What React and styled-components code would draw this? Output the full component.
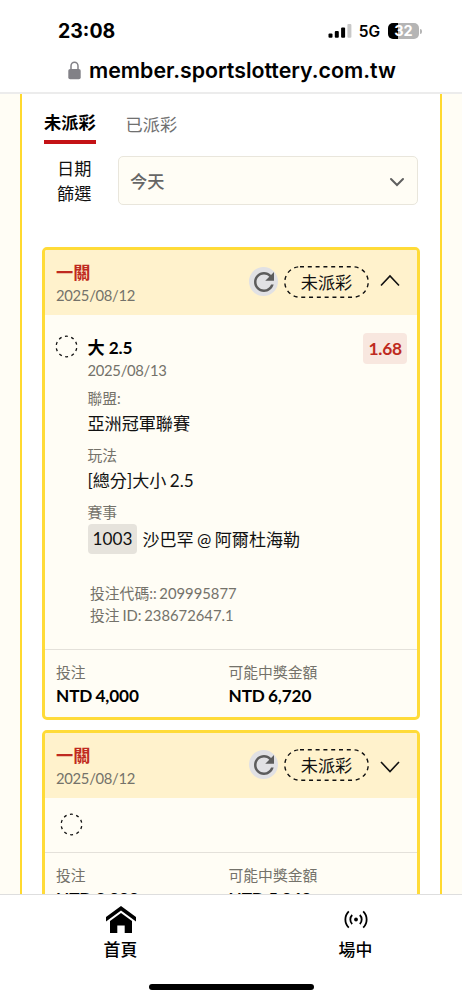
import React from 'react';
import styled, { createGlobalStyle, css } from 'styled-components';

const GlobalStyle = createGlobalStyle`
  *, *::before, *::after {
    box-sizing: border-box;
  }

  body {
    margin: 0;
    background-color: #fff;
    font-family: Lato, 'Noto Sans CJK TC', sans-serif;
    font-size: 17.2px;
    color: #111;
  }
`;

const StyledScreen = styled.div`
  height: 1000px;
  display: flex;
  flex-direction: column;
  overflow: hidden;
`;

const StyledBrowserBar = styled.header`
  flex: none;
  height: 94px;
  border-bottom: 2px solid #ececec;
  font-family: Inter, sans-serif;
  color: #000;
`;

const StyledStatus = styled.div`
  display: flex;
  align-items: center;
  justify-content: space-between;
  height: 32px;
  margin-top: 15px;
  padding: 0 40px 0 58px;
`;

const StyledTime = styled.span`
  font-size: 19.5px;
  font-weight: 700;
`;

const StyledSignals = styled.div`
  display: flex;
  align-items: center;
`;

const StyledNetwork = styled.span`
  margin: 0 8px 0 7px;
  font-size: 15.5px;
  font-weight: 600;
`;

const StyledBattery = styled.div`
  width: 31px;
  height: 16px;
  border-radius: 5px;
  background: linear-gradient(to right, #000 32%, #b5b5b5 32%);
  color: #fff;
  font-size: 14.5px;
  font-weight: 700;
  line-height: 16px;
  text-align: center;
`;

const StyledBatteryTip = styled.div`
  width: 2px;
  height: 5px;
  margin-left: 1px;
  border-radius: 0 2px 2px 0;
  background-color: #b5b5b5;
`;

const StyledAddress = styled.div`
  display: flex;
  align-items: center;
  height: 28px;
  margin-top: 9px;
  padding-left: 68px;
  font-size: 21.35px;
  font-weight: 600;

  svg {
    margin-right: 8px;
  }
`;

const StyledPage = styled.main`
  flex: 1;
  min-height: 0;
  overflow: hidden;
  padding: 0 20px;
  background-color: #fffdf5;
`;

const StyledPanel = styled.div`
  min-height: 100%;
  padding: 0 20px;
  border: solid #ffd92f;
  border-width: 0 2px;
  background-color: #fff;
`;

const StyledTabs = styled.nav`
  display: flex;
  gap: 30px;
  padding: 14px 0 0 2px;
`;

const StyledTab = styled.a`
  height: 36px;
  padding-top: 2px;
  line-height: 30px;
  color: #707070;

  ${({ $active }) =>
    $active &&
    css`
      padding-top: 0;
      border-bottom: 4px solid #c41216;
      color: #000;
      font-weight: 700;
    `}
`;

const StyledFilter = styled.div`
  display: flex;
  align-items: flex-end;
  margin-top: 11px;
`;

const StyledFilterLabel = styled.label`
  width: 62px;
  margin: 0 14px -1px 0;
  padding: 1px 12px 0 15px;
  line-height: 25px;
`;

const StyledSelect = styled.div`
  display: flex;
  flex: 1;
  align-items: center;
  justify-content: space-between;
  height: 49px;
  margin-right: 2px;
  padding: 0 12px 0 11px;
  border: 1px solid #e9e6dc;
  border-radius: 5px;
  background-color: #fffdf5;
  color: #666;
  font-weight: 500;

  svg {
    margin-top: 2px;
  }
`;

const StyledCard = styled.section`
  margin-bottom: 10px;
  overflow: hidden;
  border: 3px solid #ffdb38;
  border-radius: 5px;
  background-color: #fffdf5;

  &:first-of-type {
    margin-top: 42px;
  }
`;

const StyledCardHeader = styled.div`
  display: flex;
  align-items: center;
  height: 65px;
  padding: 0 16px 1px 11px;
  background-color: #fff2cc;
`;

const StyledMeta = styled.div`
  font-size: 14.8px;
  font-weight: 400;
  line-height: 20px;
  word-spacing: -1px;
  color: #74726a;
`;

const StyledDate = styled(StyledMeta)`
  margin-bottom: -1px;
  letter-spacing: -0.3px;
`;

const StyledCardTitle = styled.div`
  flex: 1;
  line-height: 24px;
  color: #bf2a20;
  font-weight: 700;
`;

const StyledRefresh = styled.button`
  display: grid;
  place-items: center;
  width: 29px;
  height: 29px;
  margin: 0 6px 2px 0;
  padding: 0;
  border: 0;
  border-radius: 50%;
  background-color: #e1e1e4;
`;

const StyledPill = styled.div`
  position: relative;
  width: 85px;
  height: 32px;
  margin-right: 10px;
  line-height: 33px;
  text-align: center;
  color: #111;

  svg {
    position: absolute;
    inset: 0;
  }
`;

const StyledBet = styled.div`
  display: flex;
  align-items: flex-start;
  height: 334px;
  padding: 18px 10px 0 10px;

  > svg {
    margin-top: 2px;
  }
`;

const StyledBetInfo = styled.div`
  flex: 1;
  margin-left: 9.5px;
  padding-top: 3px;
`;

const StyledSelection = styled.div`
  line-height: 24px;
  font-weight: 700;
  letter-spacing: -0.1px;
  color: #000;
`;

const StyledField = styled.div`
  margin-top: 9px;
`;

const StyledFieldValue = styled.div`
  display: flex;
  align-items: center;
  height: 28px;
  color: #111;
  font-size: 17.1px;
  word-spacing: -1px;
`;

const StyledCode = styled.span`
  height: 30px;
  margin-right: 5px;
  padding: 0 5px;
  border-radius: 4px;
  background-color: #e6e3dc;
  font-size: 17.2px;
  line-height: 30px;
`;

const StyledMatch = styled(StyledFieldValue)`
  padding-top: 5px;
`;

const StyledNumbers = styled.div`
  margin: 32px 0 0 2.5px;

  ${StyledMeta} {
    line-height: 22px;
  }
`;

const StyledOdds = styled.span`
  height: 31px;
  padding: 0 5px;
  border-radius: 4px;
  background-color: #f8e7df;
  color: #bf2a20;
  font-size: 17.4px;
  font-weight: 700;
  letter-spacing: -0.2px;
  line-height: 31px;
`;

const StyledPending = styled.div`
  height: 54px;
  padding: 15px 0 0 15px;
`;

const StyledTotals = styled.div`
  display: grid;
  grid-template-columns: 172.5px 1fr;
  height: 68px;
  padding: 12px 0 0 11px;
  border-top: 1px solid #e4e1da;
`;

const StyledAmount = styled.div`
  line-height: 27px;
  font-weight: 700;
  letter-spacing: -0.1px;
  word-spacing: -1px;
  color: #000;
`;

const StyledBottomNav = styled.nav`
  position: relative;
  flex: none;
  display: grid;
  grid-template-columns: 1fr 1fr;
  height: 106px;
  border-top: 1px solid #dedede;
  background-color: #fff;
`;

const StyledNavItem = styled.a`
  display: flex;
  flex-direction: column;
  align-items: center;
  padding: 10px 0 0 ${({ $shift }) => $shift}px;
  color: #000;
  font-size: 16.9px;
  font-weight: 500;
  line-height: 30px;
`;

const StyledHomeIndicator = styled.div`
  position: absolute;
  left: 149px;
  bottom: 10px;
  width: 165px;
  height: 6px;
  border-radius: 3px;
  background-color: #000;
`;

const SignalIcon = () => (
  <svg width="24" height="16" viewBox="0 0 24 16">
    <rect x="0.5" y="10.5" width="4" height="4.3" rx="1" />
    <rect x="6.8" y="8" width="4" height="6.8" rx="1" />
    <rect x="13.1" y="4.5" width="4" height="10.3" rx="1" />
    <rect x="19.4" y="1" width="4" height="13.8" rx="1" fill="#c8c8c8" />
  </svg>
);

const LockIcon = () => (
  <svg width="13" height="19" viewBox="0 0 13 19">
    <rect x="0.3" y="8" width="12.4" height="10.3" rx="1.8" fill="#828187" />
    <path d="M3 8.5V5a3.5 3.8 0 0 1 7 0v3.5" fill="none" stroke="#828187" strokeWidth="1.5" />
  </svg>
);

const RefreshIcon = () => (
  <svg width="30" height="30" viewBox="0 0 24 24" fill="#5c5c5c">
    <path d="M17.65 6.35C16.2 4.9 14.21 4 12 4c-4.42 0-7.99 3.58-7.99 8s3.57 8 7.99 8c3.73 0 6.84-2.55 7.73-6h-2.08c-.82 2.33-3.04 4-5.65 4-3.31 0-6-2.69-6-6s2.69-6 6-6c1.66 0 3.14.69 4.22 1.78L13 11h7V4l-2.35 2.35z" />
  </svg>
);

const DashedCircle = () => (
  <svg width="23" height="23" viewBox="0 0 23 23" fill="none" stroke="#111" strokeWidth="1.3">
    <circle cx="11.5" cy="11.5" r="10.3" pathLength="120" strokeDasharray="5.5 6.5" strokeDashoffset="-3" />
  </svg>
);

const Chevron = ({ up }) => (
  <svg width="22" height="22" viewBox="0 0 22 22" fill="none" stroke="#111" strokeWidth="1.6">
    <path d={up ? 'M2 14.5L11 5L20 14.5' : 'M2 8L11 17.5L20 8'} />
  </svg>
);

const Status = () => (
  <StyledPill>
    <svg width="85" height="32" fill="none" stroke="#111" strokeWidth="1.4">
      <rect x="0.8" y="0.8" width="83.4" height="30.4" rx="15.2" strokeDasharray="4 3.8" />
    </svg>
    未派彩
  </StyledPill>
);

const CardHeader = ({ open }) => (
  <StyledCardHeader>
    <StyledCardTitle>
      一關
      <StyledDate>2025/08/12</StyledDate>
    </StyledCardTitle>
    <StyledRefresh>
      <RefreshIcon />
    </StyledRefresh>
    <Status />
    <Chevron up={open} />
  </StyledCardHeader>
);

const Totals = ({ stake, payout }) => (
  <StyledTotals>
    <div>
      <StyledMeta>投注</StyledMeta>
      <StyledAmount>NTD {stake}</StyledAmount>
    </div>
    <div>
      <StyledMeta>可能中獎金額</StyledMeta>
      <StyledAmount>NTD {payout}</StyledAmount>
    </div>
  </StyledTotals>
);

const App = () => (
  <StyledScreen>
    <GlobalStyle />
    <StyledBrowserBar>
      <StyledStatus>
        <StyledTime>23:08</StyledTime>
        <StyledSignals>
          <SignalIcon />
          <StyledNetwork>5G</StyledNetwork>
          <StyledBattery>32</StyledBattery>
          <StyledBatteryTip />
        </StyledSignals>
      </StyledStatus>
      <StyledAddress>
        <LockIcon />
        member.sportslottery.com.tw
      </StyledAddress>
    </StyledBrowserBar>
    <StyledPage>
      <StyledPanel>
        <StyledTabs>
          <StyledTab $active>未派彩</StyledTab>
          <StyledTab>已派彩</StyledTab>
        </StyledTabs>
        <StyledFilter>
          <StyledFilterLabel>日期篩選</StyledFilterLabel>
          <StyledSelect>
            今天
            <svg width="16" height="10" fill="none" stroke="#5f5f5f" strokeWidth="2" strokeLinecap="round">
              <path d="M2 2L8 8L14 2" />
            </svg>
          </StyledSelect>
        </StyledFilter>
        <StyledCard>
          <CardHeader open />
          <StyledBet>
            <DashedCircle />
            <StyledBetInfo>
              <StyledSelection>大 2.5</StyledSelection>
              <StyledDate>2025/08/13</StyledDate>
              <StyledField>
                <StyledMeta>聯盟:</StyledMeta>
                <StyledFieldValue>亞洲冠軍聯賽</StyledFieldValue>
              </StyledField>
              <StyledField>
                <StyledMeta>玩法</StyledMeta>
                <StyledFieldValue>[總分]大小 2.5</StyledFieldValue>
              </StyledField>
              <StyledField>
                <StyledMeta>賽事</StyledMeta>
                <StyledMatch>
                  <StyledCode>1003</StyledCode>
                  沙巴罕 @ 阿爾杜海勒
                </StyledMatch>
              </StyledField>
              <StyledNumbers>
                <StyledMeta>投注代碼:: 209995877</StyledMeta>
                <StyledMeta>投注 ID: 238672647.1</StyledMeta>
              </StyledNumbers>
            </StyledBetInfo>
            <StyledOdds>1.68</StyledOdds>
          </StyledBet>
          <Totals stake="4,000" payout="6,720" />
        </StyledCard>
        <StyledCard>
          <CardHeader />
          <StyledPending>
            <DashedCircle />
          </StyledPending>
          <Totals stake="3,000" payout="5,040" />
        </StyledCard>
      </StyledPanel>
    </StyledPage>
    <StyledBottomNav>
      <StyledNavItem $shift={10}>
        <svg width="32" height="30" viewBox="0 0 32 30">
          <path d="M1 12L16 1L31 12V16.5L16 5.5L1 16.5Z" />
          <path d="M5 16L16 8L27 16V28H19.7V20.5H12.3V28H5Z" />
        </svg>
        首頁
      </StyledNavItem>
      <StyledNavItem $shift={18}>
        <svg width="24" height="30" viewBox="0 0 24 30" fill="none" stroke="#000" strokeWidth="1.8">
          <circle cx="12" cy="14.5" r="1.9" fill="#000" stroke="none" />
          <path d="M8.2 10a6.3 6.3 0 0 0 0 9M15.8 10a6.3 6.3 0 0 1 0 9M4.8 6.3a11.5 11.5 0 0 0 0 16.4M19.2 6.3a11.5 11.5 0 0 1 0 16.4" />
        </svg>
        場中
      </StyledNavItem>
      <StyledHomeIndicator />
    </StyledBottomNav>
  </StyledScreen>
);

export default App;
